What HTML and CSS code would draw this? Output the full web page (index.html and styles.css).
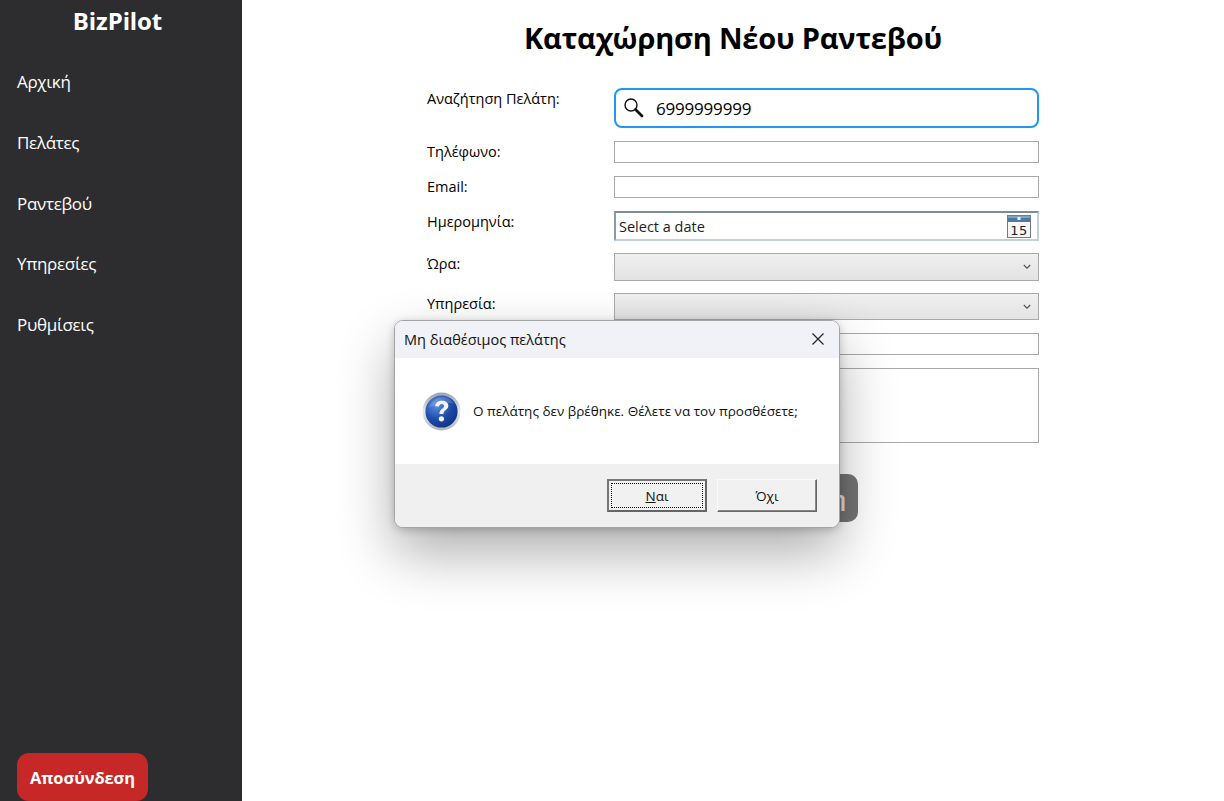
FILE: index.html
```html
<!DOCTYPE html>
<html lang="el">
<head>
<meta charset="utf-8">
<title>BizPilot</title>
<link rel="stylesheet" href="styles.css">
</head>
<body>
<div class="app">
  <aside class="sidebar">
    <div class="brand">BizPilot</div>
    <nav class="nav">
      <a class="nav-item">Αρχική</a>
      <a class="nav-item">Πελάτες</a>
      <a class="nav-item">Ραντεβού</a>
      <a class="nav-item">Υπηρεσίες</a>
      <a class="nav-item">Ρυθμίσεις</a>
    </nav>
    <button class="logout">Αποσύνδεση</button>
  </aside>
  <main class="main">
    <h1 class="title">Καταχώρηση Νέου Ραντεβού</h1>
    <div class="form">
      <div class="row row-search">
        <label class="label">Αναζήτηση Πελάτη:</label>
        <div class="search">
          <svg class="search-icon" width="22" height="22" viewBox="0 0 22 22"><circle cx="8" cy="8" r="6" fill="none" stroke="#111" stroke-width="1.4"/><path d="M12.500 12.500l6.500 6.500" stroke="#111" stroke-width="2.800" stroke-linecap="round"/></svg>
          <span class="search-text">6999999999</span>
        </div>
      </div>
      <div class="row row-text"><label class="label">Τηλέφωνο:</label><div class="input"></div></div>
      <div class="row row-text"><label class="label">Email:</label><div class="input"></div></div>
      <div class="row row-date">
        <label class="label">Ημερομηνία:</label>
        <div class="date">
          <span class="date-text">Select a date</span>
          <svg class="cal" width="24" height="23" viewBox="0 0 24 23"><rect x=".5" y=".5" width="23" height="22" fill="#f6f7f8" stroke="#6f7c88"/><rect x="1" y="1" width="22" height="6" fill="#4f79a3"/><rect x="1" y="1" width="22" height="2" fill="#7fa3c6"/><rect x="10.500" y="2" width="3" height="3" fill="#eef4fa"/><text x="12" y="20" class="cal-num">15</text></svg>
        </div>
      </div>
      <div class="row row-combo"><label class="label">Ώρα:</label><div class="combo combo-a"><svg class="chev" width="8" height="6" viewBox="0 0 8 6"><path d="M.8 1l3.200 3.200L7.200 1" fill="none" stroke="#555" stroke-width="1.200"/></svg></div></div>
      <div class="row row-combo2"><label class="label">Υπηρεσία:</label><div class="combo combo-b"><svg class="chev" width="8" height="6" viewBox="0 0 8 6"><path d="M.8 1l3.200 3.200L7.200 1" fill="none" stroke="#555" stroke-width="1.200"/></svg></div></div>
      <div class="row row-text"><span class="label"></span><div class="input"></div></div>
      <div class="row row-area"><span class="label"></span><div class="input area"></div></div>
      <button class="submit" aria-label="Καταχώρηση">η</button>
    </div>
  </main>
</div>
<div class="dialog">
  <div class="dlg-head">
    <span class="dlg-title">Μη διαθέσιμος πελάτης</span>
    <svg class="dlg-close" width="14" height="14" viewBox="0 0 14 14"><path d="M1.500 1.500l11 11M12.500 1.500l-11 11" stroke="#222" stroke-width="1.200"/></svg>
  </div>
  <div class="dlg-body">
    <svg class="dlg-icon" width="39" height="39" viewBox="0 0 40 40">
      <defs>
        <linearGradient id="ring" x1="0" y1="0" x2="0" y2="1"><stop offset="0" stop-color="#9aa3b0"/><stop offset=".5" stop-color="#e6e9ee"/><stop offset="1" stop-color="#aeb4bd"/></linearGradient>
        <radialGradient id="ball" cx=".35" cy=".3" r=".85"><stop offset="0" stop-color="#5b8fe0"/><stop offset=".55" stop-color="#1c49a6"/><stop offset="1" stop-color="#0d2c78"/></radialGradient>
      </defs>
      <circle cx="20" cy="20" r="19.500" fill="url(#ring)"/>
      <circle cx="20" cy="20" r="16.500" fill="url(#ball)"/>
      <path d="M7 16c3-8 9-11 14-11 5 0 9 2 12 7-8-2-17 0-26 4z" fill="#fff" opacity=".16"/>
      <path d="M13.500 14.500c.5-4 3.500-5.500 6.800-5.500 3.800 0 6.700 2 6.700 5.200 0 4.300-5 4.300-5 8.300h-4.200c0-5.300 4.800-5.300 4.800-8.200 0-1.300-1-2.100-2.400-2.100-1.600 0-2.500 1-2.800 2.700z" fill="#f2f4f8"/>
      <circle cx="19.900" cy="27.500" r="2.700" fill="#f2f4f8"/>
    </svg>
    <span class="dlg-msg">Ο πελάτης δεν βρέθηκε. Θέλετε να τον προσθέσετε;</span>
  </div>
  <div class="dlg-foot">
    <button class="dlg-btn dlg-btn-default"><span class="focus"><span><u>Ν</u>αι</span></span></button>
    <button class="dlg-btn">Ό<u>χ</u>ι</button>
  </div>
</div>
</body>
</html>
```

FILE: styles.css
```css
* { box-sizing: border-box; }
html, body { margin: 0; height: 100%; }
body {
  font-family: "Open Sans", "Noto Sans", "Liberation Sans", sans-serif;
  background: #fff;
  color: #000;
  overflow: hidden;
}
.app { display: flex; height: 801px; }

.sidebar {
  width: 242px;
  flex: none;
  background: #2d2d2f;
  color: #fff;
  display: flex;
  flex-direction: column;
  padding: 0 24px 0 17px;
}
.brand { font-size: 24px; font-weight: 700; line-height: 32px; margin-top: 5px; text-align: center; letter-spacing: -.1px; }
.nav { display: flex; flex-direction: column; margin-top: 33px; flex: 1; }
.nav-item { font-size: 17px; line-height: 24px; height: 60.75px; letter-spacing: -.3px; }
.logout {
  width: 131px;
  height: 48px;
  border: 0;
  border-radius: 12px;
  background: #c62828;
  color: #fff;
  font: 700 16.5px "Open Sans", sans-serif;
  letter-spacing: -.1px;
  padding: 0;
}

.main { flex: 1; display: flex; flex-direction: column; align-items: center; }
.title { font-size: 29px; line-height: 40px; font-weight: 700; margin: 18px 0 0; width: 612px; text-align: center; letter-spacing: -.2px; }
.form { width: 612px; margin-top: 30px; display: flex; flex-direction: column; }

.row { display: grid; grid-template-columns: 187px 425px; }
.label { font-size: 14.5px; line-height: 20px; padding-top: 1px; }
.row-search { height: 40px; margin-bottom: 13px; }
.row-text { height: 22px; margin-bottom: 13px; }
.row-date { height: 30px; margin-bottom: 12px; }
.row-combo { height: 28px; margin-bottom: 12px; }
.row-combo2 { height: 27px; margin-bottom: 13px; }
.row-area { height: 75px; margin-bottom: 31px; }

.search {
  border: 2px solid #2196f3;
  border-radius: 8px;
  display: flex;
  align-items: center;
  padding-left: 7px;
  background: #fff;
}
.search-icon { flex: none; }
.search-text { font-size: 17px; margin-left: 11px; letter-spacing: -.2px; }
.input { border: 1px solid #a9a9a9; background: #fff; }
.area { height: 75px; }
.date {
  border-style: solid;
  border-width: 2px;
  border-color: #7d8b99 #c3cfdb #c3cfdb #8d99a5;
  display: flex;
  align-items: center;
  justify-content: space-between;
  padding: 0 6px 0 3px;
  background: #fff;
}
.date-text { font-size: 14.5px; color: #222; }
.cal { flex: none; }
.cal-num { font: 13px "DejaVu Sans", sans-serif; fill: #222; text-anchor: middle; letter-spacing: .5px; }
.combo {
  border: 1px solid #a9a9a9;
  background: linear-gradient(#f0f0f0, #e3e3e3);
  display: flex;
  align-items: center;
  justify-content: flex-end;
  padding-right: 7px;
}
.submit {
  align-self: flex-end;
  width: 250px;
  height: 48px;
  margin-right: 181px;
  border: 0;
  border-radius: 10px;
  background: #757575;
  color: #e8e4dc;
  font: 700 20px "Open Sans", sans-serif;
  text-align: right;
  padding: 0 12px 0 0;
}

.dialog {
  position: absolute;
  left: 394px;
  top: 320px;
  width: 446px;
  height: 208px;
  border: 1px solid #a4a4a4;
  border-radius: 9px;
  background: #fff;
  box-shadow: 0 25px 55px rgba(0, 0, 0, .32), 0 2px 8px rgba(0, 0, 0, .2);
  display: flex;
  flex-direction: column;
  overflow: hidden;
}
.dlg-head {
  height: 37px;
  flex: none;
  background: #f0f2f8;
  display: flex;
  align-items: center;
  justify-content: space-between;
  padding: 0 14px 1px 9px;
}
.dlg-title { font-size: 14.5px; color: #111; }
.dlg-close { flex: none; }
.dlg-body { flex: 1; display: flex; align-items: center; padding: 0 0 0 27px; }
.dlg-icon { flex: none; }
.dlg-msg { font-size: 13.5px; margin-left: 12px; color: #111; }
.dlg-foot {
  height: 63px;
  flex: none;
  background: #f0f0f0;
  display: flex;
  justify-content: flex-end;
  gap: 10px;
  padding: 15px 22px 0 0;
}
.dlg-btn {
  width: 100px;
  height: 33px;
  padding: 0;
  background: #f1f1f1;
  border: 1px solid;
  border-color: #fafafa #666 #666 #fafafa;
  box-shadow: inset -1px -1px 0 #888;
  font: 13.5px "Open Sans", sans-serif;
  color: #111;
}
.dlg-btn-default { border: 2px solid; border-color: #777 #666 #666 #777; box-shadow: none; padding: 2px; }
.focus { display: flex; height: 100%; width: 100%; align-items: center; justify-content: center; border: 1px dotted #000; }
```
